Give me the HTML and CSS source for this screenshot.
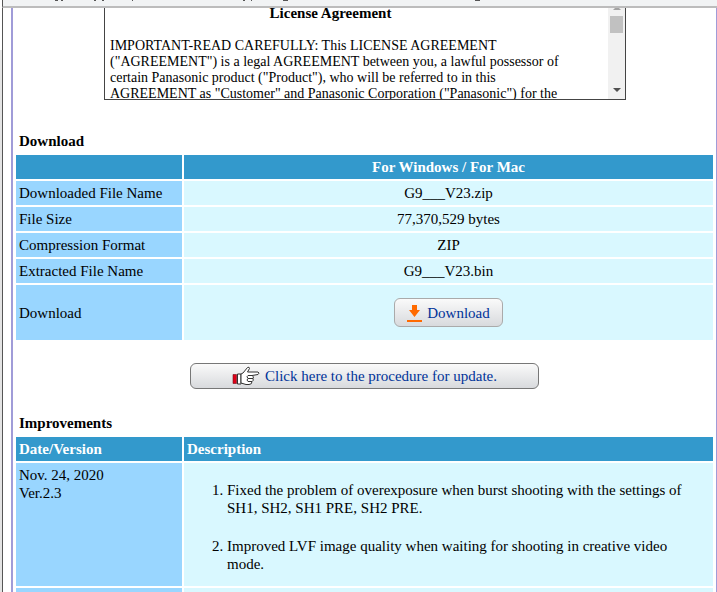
FILE: index.html
```
<!DOCTYPE html>
<html lang="en">
<head>
  <meta charset="UTF-8" />
  <meta name="viewport" content="width=device-width, initial-scale=1.0" />
  <title>Firmware Download</title>
  <link rel="stylesheet" href="styles.css">
</head>
<body>
  <div class="toolbar">
    <svg width="500" height="1" viewBox="0 0 500 1" fill="#555">
      <path d="M52 0H55V1H52Z M58 0H60V1H58Z M91 0H93V1H91Z M99 0H101V1H99Z M129 0H130V1H129Z M240 0H242V1H240Z M248 0H249V1H248Z M280 0H285V1H280Z M472 0H477V1H472Z"/>
    </svg>
  </div>
  <div class="window">
    <div class="edge"></div>
    <main class="page">
      <section class="license">
        <div class="license-text">
          <h1>License Agreement</h1>
          <p>IMPORTANT-READ CAREFULLY: This LICENSE AGREEMENT ("AGREEMENT") is a legal AGREEMENT between you, a lawful possessor of certain Panasonic product ("Product"), who will be referred to in this AGREEMENT as "Customer" and Panasonic Corporation ("Panasonic") for the</p>
        </div>
        <div class="scrollbar">
          <svg class="arrow" viewBox="0 0 8 4"><path d="M0 2L2 0H6L8 2Z" fill="#a3a3a3"/></svg>
          <div class="thumb"></div>
          <svg class="arrow down" viewBox="0 0 8 4"><path d="M0 0H8L4 4Z" fill="#505050"/></svg>
        </div>
      </section>

      <h2>Download</h2>
      <table class="download">
        <tr><th></th><th>For Windows / For Mac</th></tr>
        <tr><td>Downloaded File Name</td><td>G9___V23.zip</td></tr>
        <tr><td>File Size</td><td>77,370,529 bytes</td></tr>
        <tr><td>Compression Format</td><td>ZIP</td></tr>
        <tr><td>Extracted File Name</td><td>G9___V23.bin</td></tr>
        <tr class="tall">
          <td>Download</td>
          <td>
            <a class="btn" href="#">
              <svg width="15" height="18" viewBox="0 0 15 18"><path d="M5 1H10V6H13L7.500 13L2 6H5Z M0 16H15V18H0Z" fill="#ff6a00"/></svg>
              Download
            </a>
          </td>
        </tr>
      </table>

      <a class="btn procedure" href="#">
        <svg width="28" height="20" viewBox="0 0 28 20" fill="#fff" stroke="#333" stroke-linejoin="round">
          <path d="M1 8.500H4.500V17.500H1Z" fill="#e00018" stroke="#701018" stroke-width=".6"/>
          <path d="M5.500 8H9V18H5.500Z"/>
          <path d="M9 8L11 7L15.500 1.500Q17.500 .5 17.500 2.500L15.500 6L26 6Q28 7 26 8.500L20 9.500Q22.500 10.500 21 12.500Q22 14.500 20 15.500Q20 18.500 17 18.500H14L9 17Z"/>
          <path d="M20 9.500H16Q14 10.500 16 12.500H21M16 12.500Q14 14 16 15.500H20" fill="none"/>
        </svg>
        Click here to the procedure for update.
      </a>

      <h2>Improvements</h2>
      <table class="history">
        <tr><th>Date/Version</th><th>Description</th></tr>
        <tr>
          <td>Nov. 24, 2020<br>Ver.2.3</td>
          <td>
            <ol>
              <li>Fixed the problem of overexposure when burst shooting with the settings of SH1, SH2, SH1 PRE, SH2 PRE.</li>
              <li>Improved LVF image quality when waiting for shooting in creative video mode.</li>
            </ol>
          </td>
        </tr>
        <tr><td></td><td></td></tr>
      </table>
    </main>
  </div>
</body>
</html>
```
FILE: styles.css
```
:root {
  font-family: "Liberation Serif", "Times New Roman", serif;
  --head: #3399cc;
  --label: #99d6ff;
  --cell: #d9f8ff;
  --link: #003399;
}
* {
  box-sizing: border-box;
}
body {
  margin: 0;
  height: 100vh;
  overflow: hidden;
  display: flex;
  flex-direction: column;
  color: #000;
  font-size: 15px;
  line-height: 18px;
}
.toolbar {
  flex: none;
  display: flex;
  align-items: flex-start;
  height: 8px;
  margin-left: 2px;
  background: #f1f3f4;
  border-left: 1px solid #555;
  border-bottom: 2px solid #bcbcbc;
}
.toolbar svg {
  flex: none;
}
.window {
  flex: 1;
  min-height: 0;
  display: flex;
}
.edge {
  width: 3px;
  background: linear-gradient(#fff 42px, #e3e3e3 42px);
  border-right: 1px solid #555;
}
.page {
  flex: 1;
  height: max-content;
  margin-left: 8px;
  border-left: 2px solid #a09cd8;
  border-right: 1px solid #a09cd8;
}
.license {
  display: flex;
  width: 522px;
  height: 92px;
  margin: 0 auto 31px 91px;
  border: 1px solid #444;
  border-top: 0;
  overflow: hidden;
}
.license-text {
  flex: 1;
  padding: 0 45px 0 5px;
  font-size: 14px;
  line-height: 16px;
}
.license-text h1 {
  margin: -3px 12px 17px 0;
  font-size: 15px;
  text-align: center;
}
.license-text p {
  margin: 0;
}
.scrollbar {
  width: 17px;
  background: #f1f1f1;
  display: flex;
  flex-direction: column;
  align-items: center;
}
.arrow {
  width: 8px;
  height: 4px;
}
.thumb {
  width: 13px;
  height: 17px;
  margin-top: 4px;
  background: #c1c1c1;
}
.down {
  margin: auto 0 7px;
}
h2 {
  margin: 0 6px 2px;
  font-size: 15px;
  line-height: 20px;
}
table {
  width: calc(100% - 2px);
  margin-left: 1px;
  border-spacing: 2px;
  table-layout: fixed;
}
th, td {
  height: 24px;
  padding: 3px;
  background: var(--cell);
}
th {
  background: var(--head);
  color: #fff;
  text-align: left;
}
th:first-child {
  width: 166px;
}
td:first-child {
  background: var(--label);
}
.download th, .download td + td {
  text-align: center;
}
.tall td {
  height: 55px;
}
.btn {
  display: inline-flex;
  align-items: center;
  justify-content: center;
  vertical-align: middle;
  gap: 5px;
  height: 29px;
  padding: 0 12px;
  border: 1px solid #aaa;
  border-radius: 6px;
  background: linear-gradient(#fafafa, #d8dadd);
  color: var(--link);
  text-decoration: none;
}
.procedure {
  display: flex;
  width: 349px;
  height: 26px;
  margin: 21px auto 24px;
  border-color: #777;
}
.history td {
  vertical-align: top;
}
ol {
  margin: 15px 0 10px;
  padding: 0 20px 0 40px;
}
li + li {
  margin-top: 20px;
}
```
